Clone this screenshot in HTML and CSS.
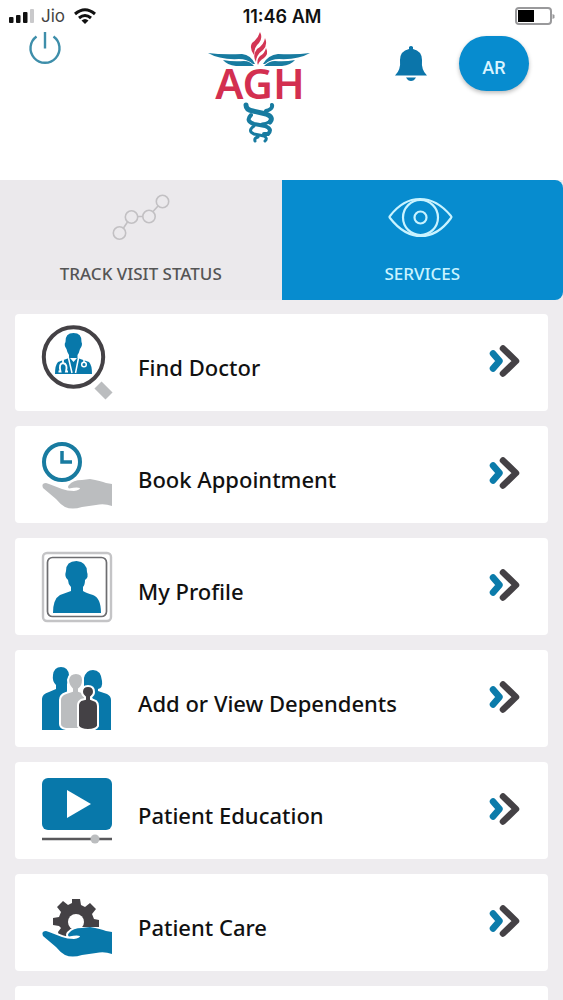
FILE: index.html
```html
<!DOCTYPE html>
<html lang="en">
<head>
<meta charset="utf-8">
<meta name="viewport" content="width=device-width, initial-scale=1">
<title>AGH Services</title>
<link rel="stylesheet" href="styles.css">
</head>
<body>
<svg class="defs" aria-hidden="true">
  <symbol id="chevrons" viewBox="0 0 31 34">
    <path d="M4 9.500l6.500 7.500-6.500 7.500" fill="none" stroke="#0b7baa" stroke-width="6.500" stroke-linecap="round" stroke-linejoin="round"/>
    <path d="M14 4.500l13 12.500-13 12.500" fill="none" stroke="#444145" stroke-width="6.500" stroke-linecap="round" stroke-linejoin="round"/>
  </symbol>
  <symbol id="hand" viewBox="0 0 70 31">
    <path d="M1 9Q-1 4 4 4L7 5 20 10Q25 12 32 12 38 11 38 9 35 8 27 9.500 25 8 27 6 31 1 40 1L48 0Q59 2 64 4L70 5V27Q62 24 54 26L40 28Q30 31 23 28 18 25 14 20Z" fill="currentColor"/>
  </symbol>
</svg>

<div class="status">
  <div class="carrier">
    <svg width="26" height="16" viewBox="0 0 26 16" aria-hidden="true">
      <g fill="#111"><rect y="9" width="4.500" height="6" rx="1"/><rect x="7" y="7" width="4.500" height="8" rx="1"/><rect x="14" y="4" width="4.500" height="11" rx="1"/></g>
      <rect x="21" y="1" width="4" height="14" rx="1" fill="#c9c9cb"/>
    </svg>
    <span>Jio</span>
    <svg class="wifi" width="22" height="16" viewBox="0 0 22 16" aria-hidden="true">
      <g fill="none" stroke="#111" stroke-width="3"><path d="M1 6Q11-2.500 21 6"/><path d="M5 10Q11 5 17 10"/></g>
      <path d="M7.500 12.500Q11 9.500 14.500 12.500L11 16Z" fill="#111"/>
    </svg>
  </div>
  <time>11:46 AM</time>
  <svg class="battery" width="40" height="18" viewBox="0 0 40 18" aria-hidden="true">
    <rect x="1" y="1" width="35" height="16" rx="3" fill="#fff" stroke="#99999b" stroke-width="2"/>
    <rect x="3" y="3" width="16" height="12" fill="#000"/>
    <path d="M37.500 7v5l2-1V8z" fill="#99999b"/>
  </svg>
</div>

<header class="header">
  <button class="icon-button power" aria-label="Log out">
    <svg width="34" height="36" viewBox="0 0 34 36"><path d="M8.500 4.500A14.500 14.500 0 1 0 25.500 4.500M17 0v16.500" fill="none" stroke="#3e8eaa" stroke-width="2.400"/></svg>
  </button>
  <svg class="logo" width="104" height="112" viewBox="0 0 104 112" role="img" aria-label="AGH">
    <g fill="#d33655">
      <path d="M52 0Q55 6 51 11 46 15 46 23 41 16 44 11 50 7 52 0Z"/>
      <path d="M57 6Q60 13 55 18 48 23 48 30 44 23 49 17 56 13 57 6Z"/>
      <path d="M58 16Q61 22 56 26 51 29 50 33 48 28 52 24 57 21 58 16Z"/>
    </g>
    <g fill="#187ba0">
      <path d="M0 21Q14 23 34 22 43 23 47 32L45 32Q39 27 31 27 12 28 0 21Z"/>
      <path d="M15 28Q25 30 36 29 42 29 46 34H28Q19 33 15 28Z"/>
      <path d="M102 21Q88 23 70 22 60 23 55 32L57 32Q63 27 71 27 90 28 102 21Z"/>
      <path d="M87 28Q77 30 67 29 61 29 56 34H74Q83 33 87 28Z"/>
    </g>
    <text x="52" y="67" text-anchor="middle" class="logo-text">AGH</text>
    <g fill="none" stroke="#187ba0" stroke-linecap="round">
      <path stroke-width="5" d="M38 73Q38 78 45 79L58 82Q66 85 62 90"/>
      <path stroke-width="4" d="M64 73Q65 77 58 79M43 83Q37 89 46 92L57 94Q65 97 60 102L56 102"/>
      <path stroke-width="3" d="M61 90Q58 92 54 92M46 94Q39 99 46 102L56 104Q60 106 57 109M50 105Q46 106 47 109"/>
    </g>
  </svg>
  <div class="actions">
    <button class="icon-button" aria-label="Notifications">
      <svg width="34" height="38" viewBox="0 0 34 38"><path d="M15 2Q17 0 19 2V4Q28 6 28 15 27 25 33 30.500H1Q7 25 6 15 6 6 15 4ZM12 32.500H22Q20 36 17 36T12 32.500Z" fill="#0b75aa"/></svg>
    </button>
    <button class="language">AR</button>
  </div>
</header>

<nav class="tabs">
  <button class="tab">
    <svg width="64" height="54" viewBox="0 0 64 54" aria-hidden="true">
      <g fill="none" stroke="#c2c0c3" stroke-width="1.600"><circle cx="10.500" cy="43" r="6.200"/><circle cx="22.500" cy="27" r="6.200"/><circle cx="40" cy="26.500" r="6.200"/><circle cx="53.500" cy="11.500" r="6.200"/><path d="M14.500 38l4-6M29 26.500h5M44 21.500l5-5.500"/></g>
    </svg>
    <span>TRACK VISIT STATUS</span>
  </button>
  <button class="tab tab-active" aria-current="page">
    <svg width="68" height="54" viewBox="0 0 68 54" aria-hidden="true">
      <g fill="none" stroke="#c9f3ff" stroke-width="2.200"><path d="M2 26Q15 9 32 9T63 26Q64 27 63 28 50 46 33 46T2 28Q1 27 2 26Z"/><circle cx="32.500" cy="27.500" r="17.500"/><circle cx="32.500" cy="27.500" r="6"/></g>
    </svg>
    <span>SERVICES</span>
  </button>
</nav>

<main>
  <ul class="services">
    <li><a class="card" href="#doctor">
      <svg class="icon" viewBox="0 0 72 76" aria-hidden="true">
        <path d="M57 60l11 11" stroke="#bbbdbf" stroke-width="10"/>
        <circle cx="32.500" cy="32" r="29.700" fill="#fff" stroke="#444145" stroke-width="4"/>
        <path d="M24.500 17Q24 8 32.500 8T40.500 17Q42 20 39 24 38 28 36.500 30V33L48 37Q51 40 51 49H14Q14 40 17 37L28 33V30Q26 27 25.500 24 22.500 20 24.500 17Z" fill="#0878aa"/>
        <path d="M27.500 33l3.500 15M37.500 33l-3 15" stroke="#fff" stroke-width="1.500"/>
        <path d="M29 33l3.500 4 3.500-4z" fill="#fff"/>
        <path d="M22 35v3M17.500 46.500h2q-2-8 2.500-8.500 5 1 3 8.500h2" fill="none" stroke="#fff" stroke-width="1.800"/>
        <path d="M43 34v3" stroke="#fff" stroke-width="1.500"/><circle cx="43" cy="39.500" r="2.300" fill="#0878aa" stroke="#fff" stroke-width="1.500"/>
      </svg>
      <span class="label">Find Doctor</span>
      <svg class="go" aria-hidden="true"><use href="#chevrons"/></svg>
    </a></li>
    <li><a class="card" href="#appointment">
      <svg class="icon" viewBox="0 0 72 76" aria-hidden="true">
        <circle cx="21" cy="25" r="18" fill="none" stroke="#187ba0" stroke-width="4"/>
        <path d="M21 14v11h10" fill="none" stroke="#187ba0" stroke-width="3.500"/>
        <use class="hand-gray" href="#hand" x="1" y="42" width="70" height="31"/>
      </svg>
      <span class="label">Book Appointment</span>
      <svg class="go" aria-hidden="true"><use href="#chevrons"/></svg>
    </a></li>
    <li><a class="card" href="#profile">
      <svg class="icon" viewBox="0 0 72 76" aria-hidden="true">
        <rect x="2" y="4" width="68" height="68" rx="4" fill="#fff" stroke="#c4c4c6" stroke-width="2.400"/>
        <rect x="6.500" y="8.500" width="59" height="59" rx="5" fill="#fff" stroke="#6d6d70" stroke-width="1.700"/>
        <path d="M25 22Q25 12 35.500 12 46 13 46 23 48 28 44 31 44 36 42 38V42Q45 44 52 46 60 49 60 64H12Q12 50 19 46L30 42V38Q27 35 27 31 23 28 25 22Z" fill="#0878aa"/>
      </svg>
      <span class="label">My Profile</span>
      <svg class="go" aria-hidden="true"><use href="#chevrons"/></svg>
    </a></li>
    <li><a class="card" href="#dependents">
      <svg class="icon" viewBox="0 0 72 76" aria-hidden="true">
        <path d="M12 14Q13 6 20 6T28 14Q29 19 26 23V69H1V38Q1 33 8 31L15 28V24Q11 20 12 14Z" fill="#0878aa"/>
        <path d="M43 17Q45 9 52 9 60 9 61 20 62 27 57 28V30L66 33Q70 35 70 39V69H43Z" fill="#0878aa"/>
        <path d="M27 19Q28 12 35 12T42 19Q42 25 38 28V30L46 33Q51 35 51 40V64Q50 68 44 68H25Q19 67 19 63V39Q19 34 25 32L31 30V28Q27 24 27 19Z" fill="#bbbdbf" stroke="#fff" stroke-width="2"/>
        <path d="M41 31Q41 25 47 25T53 31Q53 34 50 36V38L55 40Q57 42 57 45V65Q55 69 47 69T37 65V44Q37 41 40 39L44 38V36Q41 34 41 31Z" fill="#444145" stroke="#fff" stroke-width="2"/>
      </svg>
      <span class="label">Add or View Dependents</span>
      <svg class="go" aria-hidden="true"><use href="#chevrons"/></svg>
    </a></li>
    <li><a class="card" href="#education">
      <svg class="icon" viewBox="0 0 72 76" aria-hidden="true">
        <rect x="1" y="5" width="70" height="52" rx="6" fill="#0878aa"/>
        <path d="M26 17v28l24-14z" fill="#fff"/>
        <path d="M1 66h70" stroke="#58585b" stroke-width="2.600"/><circle cx="54" cy="66" r="4.500" fill="#bbbdbf"/>
      </svg>
      <span class="label">Patient Education</span>
      <svg class="go" aria-hidden="true"><use href="#chevrons"/></svg>
    </a></li>
    <li><a class="card" href="#care">
      <svg class="icon" viewBox="0 0 72 76" aria-hidden="true">
        <path d="M31 14h8l1 6 4 2 5-4 6 6-4 5 2 5 5 1v7l-6 1-2 6-24 5-8-2-1-5 3-4-2-2-6-1v-7l6-1 2-5-4-5 6-6 5 4 4-2z" fill="#444145"/>
        <circle cx="35" cy="37" r="8" fill="#fff"/>
        <use class="hand-outline" href="#hand" x="1" y="42" width="70" height="31"/>
        <use class="hand-blue" href="#hand" x="1" y="42" width="70" height="31"/>
      </svg>
      <span class="label">Patient Care</span>
      <svg class="go" aria-hidden="true"><use href="#chevrons"/></svg>
    </a></li>
    <li><div class="card"></div></li>
  </ul>
</main>
</body>
</html>
```
FILE: styles.css
```css
* { box-sizing: border-box; }
html { height: 100%; overflow: hidden; }
body {
  margin: 0;
  background: #eeecef;
  color: #111;
  font-family: "Noto Sans", sans-serif;
}
svg { display: block; flex: none; }
button { border: 0; padding: 0; background: none; font: inherit; cursor: pointer; }
.defs { display: none; }

.status {
  display: grid;
  grid-template-columns: 1fr auto 1fr;
  align-items: center;
  height: 32px;
  padding: 0 8px 0 9px;
  background: #fff;
  font-family: Inter, sans-serif;
  font-size: 17px;
}
.status time { font-weight: 600; font-size: 18px; }
.carrier { display: flex; align-items: center; gap: 6px; color: #444; }
.wifi { margin-left: 3px; }
.battery { justify-self: end; }

.header {
  display: grid;
  grid-template-columns: 5fr auto 6fr;
  align-items: start;
  height: 148px;
  padding: 0 34px 0 28px;
  background: #fff;
}
.power { justify-self: start; }
.logo-text {
  fill: #d32f50;
  font-family: "Noto Sans", sans-serif;
  font-size: 42px;
  font-weight: 600;
}
.actions { display: flex; justify-content: flex-end; align-items: center; gap: 31px; padding-top: 4px; }
.language {
  width: 70px;
  height: 55px;
  padding-top: 8px;
  border-radius: 28px;
  background: #078ccf;
  box-shadow: 0 2px 4px #0004;
  color: #d9f4ff;
  font-family: Roboto, sans-serif;
  font-size: 18px;
  font-weight: 500;
}

.tabs { display: grid; grid-template-columns: 1fr 1fr; background: #eeecef; }
.tab {
  display: flex;
  flex-direction: column;
  align-items: center;
  gap: 20px;
  height: 120px;
  padding-top: 10px;
  background: #ebe9ec;
  color: #555;
  font-size: 17px;
  font-weight: 500;
  line-height: 20px;
}
.tab-active { border-radius: 0 8px 8px 0; background: #078ccf; color: #c9f3ff; }

.services {
  display: grid;
  gap: 15px;
  margin: 0;
  padding: 14px 15px;
  list-style: none;
}
.card {
  display: flex;
  align-items: center;
  height: 97px;
  padding: 0 28px 0 26px;
  border-radius: 4px;
  background: #fff;
  color: #111;
  font-size: 22px;
  font-weight: 500;
  text-decoration: none;
}
.icon { width: 72px; height: 76px; }
.label { flex: 1; padding: 8px 0 0 25px; }
.go { width: 31px; height: 34px; margin-bottom: 3px; }
.hand-gray { color: #bbbdbf; }
.hand-blue { color: #0878aa; }
.hand-outline { color: #fff; stroke: #fff; stroke-width: 4; }
```
